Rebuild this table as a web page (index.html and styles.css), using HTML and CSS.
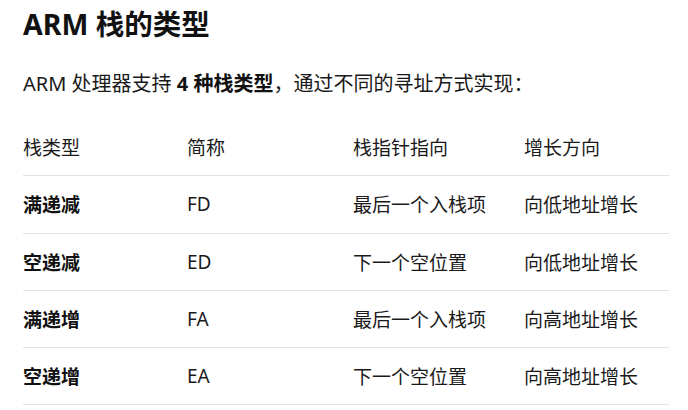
FILE: index.html
```html
<!DOCTYPE html>
<html lang="zh-CN">
<head>
<meta charset="utf-8">
<link rel="stylesheet" href="styles.css">
</head>
<body>
<div class="doc">
  <h2 class="title">ARM 栈的类型</h2>
  <p class="intro">ARM 处理器支持 <strong>4 种栈类型</strong>，通过不同的寻址方式实现：</p>
  <table class="stack-table">
    <thead>
      <tr>
        <th class="c1">栈类型</th>
        <th class="c2">简称</th>
        <th class="c3">栈指针指向</th>
        <th class="c4">增长方向</th>
      </tr>
    </thead>
    <tbody>
      <tr><td class="name">满递减</td><td>FD</td><td>最后一个入栈项</td><td>向低地址增长</td></tr>
      <tr><td class="name">空递减</td><td>ED</td><td>下一个空位置</td><td>向低地址增长</td></tr>
      <tr><td class="name">满递增</td><td>FA</td><td>最后一个入栈项</td><td>向高地址增长</td></tr>
      <tr><td class="name">空递增</td><td>EA</td><td>下一个空位置</td><td>向高地址增长</td></tr>
    </tbody>
  </table>
</div>
</body>
</html>
```

FILE: styles.css
```css
html, body {
  margin: 0;
  padding: 0;
  background: #ffffff;
}
body {
  font-family: "Noto Sans", "Noto Sans CJK SC", sans-serif;
  color: #1a1a1a;
}
.doc {
  padding: 0 19px 0 23px;
}
.title {
  margin: 0;
  padding-top: 5px;
  font-size: 28.5px;
  line-height: 38px;
  font-weight: 700;
  color: #111;
}
.intro {
  margin: 26px 0 0 0;
  font-size: 20px;
  line-height: 30px;
}
.intro strong {
  font-weight: 700;
  color: #111;
}
.stack-table {
  width: 100%;
  border-collapse: collapse;
  margin-top: 20px;
  font-size: 19px;
}
.stack-table th,
.stack-table td {
  text-align: left;
  padding: 0;
  height: 56.3px;
  vertical-align: middle;
  font-weight: 400;
}
.stack-table tbody td {
  border-top: 1px solid #e3e3e3;
}
.stack-table tbody tr:last-child td {
  border-bottom: 1px solid #e3e3e3;
}
.stack-table td.name {
  font-weight: 700;
  color: #111;
}
.c1 { width: 164px; }
.c2 { width: 166px; }
.c3 { width: 171px; }
```
